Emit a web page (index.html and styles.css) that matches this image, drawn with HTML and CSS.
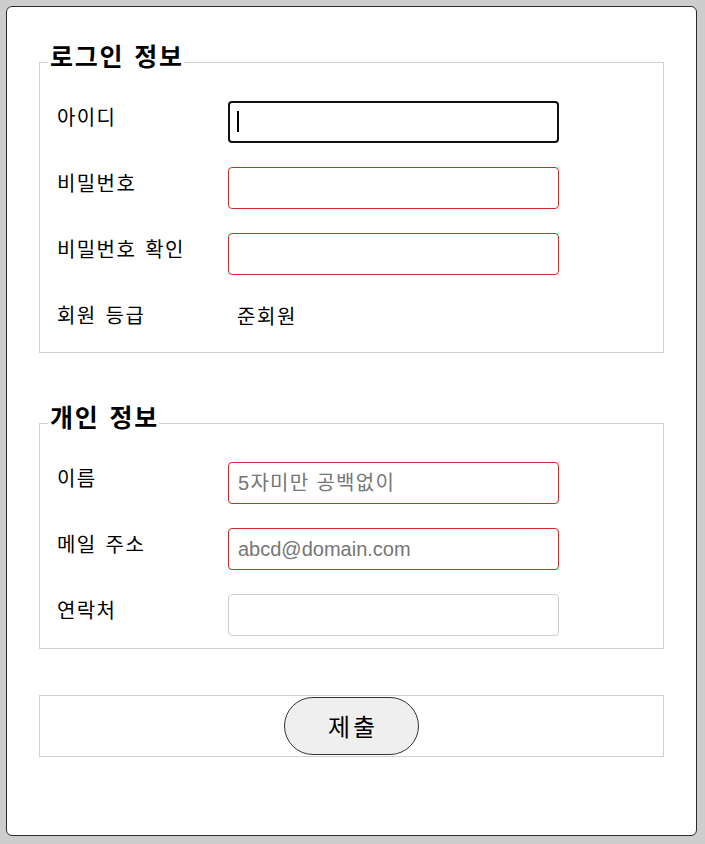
FILE: index.html
```html
<!DOCTYPE html>
<html lang="ko">
<head>
<meta charset="utf-8">
<title>회원 가입</title>
<link rel="stylesheet" href="styles.css">
</head>
<body>
<form class="card">
  <fieldset class="group group-login">
    <legend class="group-title">로그인 정보</legend>
    <div class="rows">
      <div class="row">
        <label class="label" for="uid">아이디</label>
        <span class="field field-focused"><input class="input input-focus" id="uid" type="text"></span>
      </div>
      <div class="row">
        <label class="label" for="pw">비밀번호</label>
        <span class="field"><input class="input" id="pw" type="password"></span>
      </div>
      <div class="row">
        <label class="label" for="pw2">비밀번호 확인</label>
        <span class="field"><input class="input" id="pw2" type="password"></span>
      </div>
      <div class="row">
        <span class="label">회원 등급</span>
        <span class="value">준회원</span>
      </div>
    </div>
  </fieldset>

  <fieldset class="group group-personal">
    <legend class="group-title">개인 정보</legend>
    <div class="rows">
      <div class="row">
        <label class="label" for="name">이름</label>
        <span class="field"><input class="input input-korean" id="name" type="text" placeholder="5자미만 공백없이"></span>
      </div>
      <div class="row">
        <label class="label" for="mail">메일 주소</label>
        <span class="field"><input class="input" id="mail" type="text" placeholder="abcd@domain.com"></span>
      </div>
      <div class="row">
        <label class="label" for="tel">연락처</label>
        <span class="field"><input class="input input-plain" id="tel" type="text"></span>
      </div>
    </div>
  </fieldset>

  <fieldset class="group group-actions">
    <button class="submit" type="button">제출</button>
  </fieldset>
</form>
</body>
</html>
```

FILE: styles.css
```css
html, body {
  margin: 0;
  background: #cdcdcd;
}

body {
  padding: 6px 8px 8px 6px;
  font-family: "Noto Sans CJK KR", "Noto Sans", sans-serif;
  color: #000;
}

.card {
  box-sizing: border-box;
  width: 691px;
  height: 830px;
  margin: 0;
  background: #fff;
  border: 1px solid #2b2b2b;
  border-radius: 6px;
  padding: 33px 32px 0;
}

.group {
  margin: 0;
  padding: 17px 17px 12px;
  border: 1px solid #d0d0d0;
  min-inline-size: 0;
}

.group-login {
  padding-bottom: 11px;
}

.group-personal {
  margin-top: 48px;
}

.group-title {
  margin-left: -9px;
  padding: 0 0 14px 2px;
  font-size: 25px;
  font-weight: 700;
  line-height: 30px;
  letter-spacing: 1.8px;
  word-spacing: 1px;
}

.rows {
  display: grid;
  row-gap: 24px;
}

.row {
  display: flex;
  align-items: flex-start;
  height: 42px;
}

.label {
  flex: none;
  width: 171px;
  margin-top: 4px;
  font-size: 20px;
  line-height: 24px;
  letter-spacing: 1.4px;
  word-spacing: 2px;
}

.value {
  margin-top: 5px;
  padding-left: 9px;
  font-size: 20px;
  line-height: 24px;
  letter-spacing: 1.6px;
}

.field {
  position: relative;
  display: block;
}

.input {
  display: block;
  box-sizing: border-box;
  width: 331px;
  height: 42px;
  margin: 0;
  padding: 0 9px;
  border: 1px solid #cf2a2a;
  border-radius: 4px;
  background: #fff;
  outline: none;
  font: 20px "Liberation Sans", "Noto Sans CJK KR", sans-serif;
  color: #000;
}

.input::placeholder {
  color: #767676;
}

.input-korean {
  letter-spacing: 1.3px;
}

.input-plain {
  border-color: #cfcfcf;
}

.input-focus {
  border: 2px solid #111;
  padding-left: 8px;
}

.field-focused::after {
  content: "";
  position: absolute;
  left: 9px;
  top: 10px;
  width: 2px;
  height: 21px;
  background: #000;
}

.group-actions {
  margin-top: 46px;
  padding: 1px;
  text-align: center;
}

.submit {
  box-sizing: border-box;
  width: 135px;
  height: 58px;
  margin: 0;
  padding: 0 0 0 3px;
  border: 1px solid #333;
  border-radius: 29px;
  background: #efefef;
  font-family: "Noto Sans CJK KR", sans-serif;
  font-size: 24px;
  line-height: 30px;
  letter-spacing: 3px;
  color: #000;
  vertical-align: top;
}
```
